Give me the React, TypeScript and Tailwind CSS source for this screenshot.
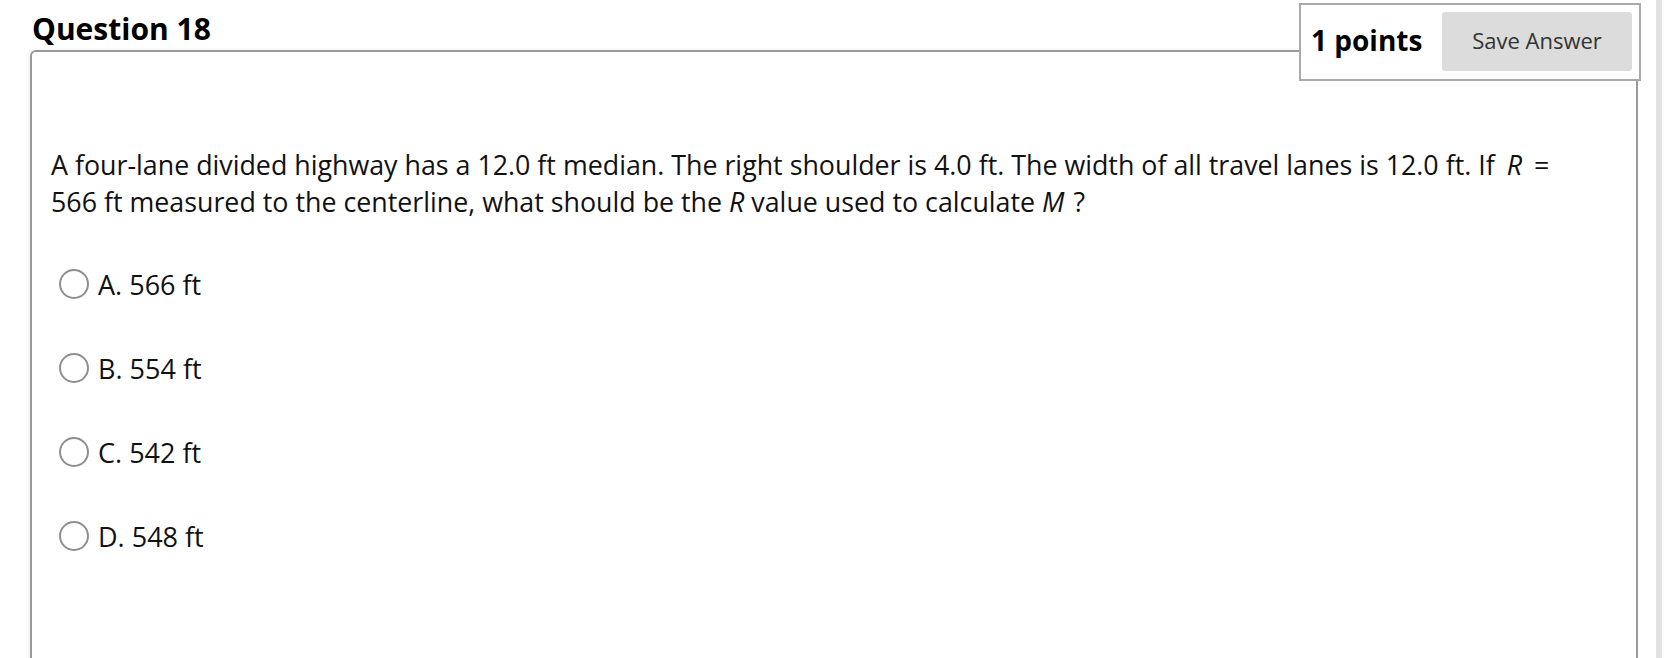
import React from "react";

const options = [
  { letter: "A.", text: "566 ft" },
  { letter: "B.", text: "554 ft" },
  { letter: "C.", text: "542 ft" },
  { letter: "D.", text: "548 ft" },
];

export default function App() {
  return (
    <div
      className="relative w-[1668px] h-[658px] overflow-hidden bg-white text-[#111111]"
      style={{ fontFamily: '"Open Sans", "Noto Sans", sans-serif' }}
    >
      <div className="flex">
        <div className="pl-[30px] w-[1656px]">
          {/* header row */}
          <div className="flex w-[1611px] items-start justify-between pt-[3px]">
            <div className="pt-[6px] pl-[2px] text-[30px] font-bold leading-[40px] text-black">
              Question 18
            </div>
            <div className="relative z-10 flex h-[78px] w-[342px] items-start border-2 border-[#aaaaaa] bg-white pl-[10px] pr-[7px] pt-[7px]">
              <span className="mt-[12px] text-[28px] font-bold leading-[32px] text-black">1 points</span>
              <button className="ml-auto flex h-[59px] w-[190px] items-center justify-center rounded-[3px] bg-[#dcdcdc] pb-[3px] text-[22px] text-[#333333]">
                Save Answer
              </button>
            </div>
          </div>
          {/* main box */}
          <div className="mt-[-31px] h-[640px] w-[1608px] rounded-tl-[6px] border-2 border-b-0 border-[#999999] pt-[94px] pl-[19px] shadow-[-2px_0_4px_rgba(0,0,0,0.05)]">
            <p className="w-[1560px] text-[26.8px] leading-[37px] text-[#111111]">
              A four-lane divided highway has a 12.0 ft median. The right shoulder is 4.0 ft. The width of all travel lanes is 12.0 ft. If{" "}
              <i className="ml-[5px] mr-[12px]">R</i>=
              <br />
              566 ft measured to the centerline, what should be the <i>R</i> value used to calculate <i className="mr-[2px]">M</i>{" "}?
            </p>
            <div className="mt-[46px] flex flex-col gap-[48px] pl-[8px]">
              {options.map((o) => (
                <label key={o.letter} className="flex h-[36px] items-center">
                  <span className="h-[30px] w-[30px] rounded-full border-[2.5px] border-[#8f8f8f] bg-white" />
                  <span className="ml-[9px] text-[27px] leading-none text-[#111111]">
                    {o.letter} {o.text}
                  </span>
                </label>
              ))}
            </div>
          </div>
        </div>
        <div className="h-[658px] w-[6px] bg-[#e2e2e2]" />
      </div>
    </div>
  );
}
